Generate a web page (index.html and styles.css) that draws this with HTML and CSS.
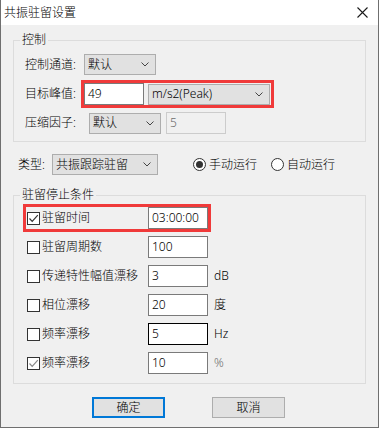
FILE: index.html
```html
<!DOCTYPE html>
<html>
<head>
<meta charset="UTF-8">
<title>共振驻留设置</title>
<link rel="stylesheet" href="styles.css">
</head>
<body>
<div class="window">
	<div class="titlebar">
		<span class="title">共振驻留设置</span>
		<svg class="close" width="11" height="11" viewBox="0 0 11 11"><path d="M0.5 0.5 L10.5 10.5 M10.5 0.5 L0.5 10.5" stroke="#1a1a1a" stroke-width="1.1" fill="none"/></svg>
	</div>
	<div class="body">
		<fieldset class="group group-ctrl">
			<legend>控制</legend>
			<div class="group-body">
				<div class="row row-21">
					<label class="lbl lbl-59">控制通道:</label>
					<div class="combo w72"><span>默认</span><svg class="chev" width="8" height="5" viewBox="0 0 8 5"><path d="M0.5 0.5 L4 4 L7.5 0.5" stroke="#444" fill="none"/></svg></div>
				</div>
				<div class="row row-peak">
					<label class="lbl lbl-56">目标峰值:</label>
					<div class="mark mark-peak">
						<div class="edit w60">49</div>
						<div class="combo w122"><span>m/s2(Peak)</span><svg class="chev" width="8" height="5" viewBox="0 0 8 5"><path d="M0.5 0.5 L4 4 L7.5 0.5" stroke="#444" fill="none"/></svg></div>
					</div>
				</div>
				<div class="row row-22">
					<label class="lbl lbl-59">压缩因子:</label>
					<div class="combo w72"><span>默认</span><svg class="chev" width="8" height="5" viewBox="0 0 8 5"><path d="M0.5 0.5 L4 4 L7.5 0.5" stroke="#444" fill="none"/></svg></div>
					<div class="edit edit-off w60">5</div>
				</div>
			</div>
		</fieldset>

		<div class="type-row">
			<label class="lbl lbl-34">类型:</label>
			<div class="combo w106"><span>共振跟踪驻留</span><svg class="chev" width="8" height="5" viewBox="0 0 8 5"><path d="M0.5 0.5 L4 4 L7.5 0.5" stroke="#444" fill="none"/></svg></div>
			<div class="radio radio-first"><span class="dot on"></span>手动运行</div>
			<div class="radio"><span class="dot"></span>自动运行</div>
		</div>

		<fieldset class="group group-stop">
			<legend>驻留停止条件</legend>
			<div class="group-body">
				<div class="mark mark-time">
					<div class="check-item"><span class="box"><svg width="11" height="11" viewBox="0 0 11 11"><path d="M1.5 5.5 L4.2 8.3 L9.8 2.2" stroke="#333" stroke-width="1.2" fill="none"/></svg></span>驻留时间</div>
					<div class="edit w60">03:00:00</div>
				</div>
				<div class="stop-row">
					<div class="check-item"><span class="box"></span>驻留周期数</div>
					<div class="edit w60">100</div>
				</div>
				<div class="stop-row">
					<div class="check-item"><span class="box"></span>传递特性幅值漂移</div>
					<div class="edit w60">3</div>
					<span class="unit">dB</span>
				</div>
				<div class="stop-row">
					<div class="check-item"><span class="box"></span>相位漂移</div>
					<div class="edit w60">20</div>
					<span class="unit">度</span>
				</div>
				<div class="stop-row">
					<div class="check-item"><span class="box"></span>频率漂移</div>
					<div class="edit edit-focus w60">5</div>
					<span class="unit">Hz</span>
				</div>
				<div class="stop-row">
					<div class="check-item"><span class="box"><svg width="11" height="11" viewBox="0 0 11 11"><path d="M1.5 5.5 L4.2 8.3 L9.8 2.2" stroke="#8a8a8a" stroke-width="1.2" fill="none"/></svg></span>频率漂移</div>
					<div class="edit w60">10</div>
					<span class="unit unit-dim">%</span>
				</div>
			</div>
		</fieldset>

		<div class="buttons">
			<a href="javascript:void(0)" class="btn btn-default">确定</a>
			<a href="javascript:void(0)" class="btn">取消</a>
		</div>
	</div>
</div>
</body>
</html>
```

FILE: styles.css
```css
* {
	box-sizing: border-box;
}

body {
	margin: 0;
	font-family: "Noto Sans", "Noto Sans CJK SC", sans-serif;
	font-size: 12px;
	font-weight: 300;
	line-height: 16px;
	color: #000;
}

.window {
	width: 379px;
	height: 428px;
	border: 1px solid #6f6f6f;
	border-top: none;
	background: #f0f0f0;
	display: flex;
	flex-direction: column;
}

.titlebar {
	height: 25px;
	background: #fff;
	display: flex;
	align-items: center;
	padding: 0 10px 0 3px;
	flex-shrink: 0;
}

.title {
	flex: 1;
}

.close {
	display: block;
}

.body {
	flex: 1;
}

/* group boxes */
.group {
	margin: 0 0 0 12px;
	padding: 0;
	width: 353px;
	border: 1px solid #dcdcdc;
	min-width: 0;
}

.group legend {
	margin-left: 6px;
	padding: 0 2px;
	line-height: 16px;
}

.group-ctrl {
	margin-top: 7px;
}

.group-ctrl .group-body {
	padding: 6px 0 7px 11px;
	display: flex;
	flex-direction: column;
	gap: 5px;
}

.group-stop {
	margin-top: 12px;
}

.group-stop .group-body {
	padding: 1px 0 9px 13px;
	display: flex;
	flex-direction: column;
	gap: 7px;
}

.row {
	display: flex;
	align-items: center;
}

.row-21 {
	height: 21px;
}

.row-22 {
	height: 22px;
	margin-top: -1px;
	gap: 5px;
}

.lbl {
	flex-shrink: 0;
}

.lbl-59 {
	width: 59px;
}

.lbl-56 {
	width: 56px;
}

.lbl-34 {
	width: 34px;
}

/* red highlight frames */
.mark {
	display: flex;
	align-items: center;
	border: 3px solid #f03a3a;
}

.mark-peak {
	gap: 4px;
	padding-right: 1px;
}

.mark-time {
	width: 188px;
	height: 28px;
	margin-left: -4px;
	padding: 0 1px 0 1px;
	margin-bottom: -3px;
}

/* controls */
.combo {
	height: 21px;
	background: #e1e1e1;
	border: 1px solid #adadad;
	display: flex;
	align-items: center;
	justify-content: space-between;
	padding: 0 6px 0 3px;
	flex-shrink: 0;
}

.chev {
	display: block;
}

.w60 {
	width: 60px;
}

.w72 {
	width: 72px;
}

.w106 {
	width: 106px;
}

.w122 {
	width: 122px;
}

.edit {
	height: 22px;
	background: #fff;
	border: 1px solid #7a7a7a;
	padding: 0 2px 0 3px;
	display: flex;
	align-items: center;
	flex-shrink: 0;
}

.edit-off {
	background: #f0f0f0;
	border-color: #cccccc;
	color: #6d6d6d;
}

.edit-focus {
	border-color: #000;
}

/* type row */
.type-row {
	display: flex;
	align-items: center;
	height: 21px;
	margin-top: 12px;
	padding-left: 17px;
}

.radio {
	display: flex;
	align-items: center;
	gap: 3px;
	margin-left: 14px;
}

.radio-first {
	margin-left: 35px;
}

.dot {
	width: 13px;
	height: 13px;
	border: 1px solid #333;
	border-radius: 50%;
	background: #fff;
	display: flex;
	align-items: center;
	justify-content: center;
}

.dot.on::after {
	content: "";
	width: 7px;
	height: 7px;
	border-radius: 50%;
	background: #333;
}

/* stop conditions */
.stop-row {
	display: flex;
	align-items: center;
	height: 22px;
}

.check-item {
	width: 121px;
	display: flex;
	align-items: center;
	gap: 2px;
	flex-shrink: 0;
}

.box {
	width: 13px;
	height: 13px;
	border: 1px solid #333;
	background: #fff;
	display: flex;
	align-items: center;
	justify-content: center;
}

.box svg {
	display: block;
}

.unit {
	margin-left: 6px;
}

.unit-dim {
	color: #6d6d6d;
}

/* buttons */
.buttons {
	display: flex;
	gap: 47px;
	margin-top: 13px;
	padding-left: 91px;
}

.btn {
	display: inline-block;
	width: 73px;
	height: 21px;
	line-height: 19px;
	text-align: center;
	text-decoration: none;
	color: #000;
	background: #e1e1e1;
	border: 1px solid #adadad;
}

.btn-default {
	border: 2px solid #0078d7;
	line-height: 17px;
}
```
